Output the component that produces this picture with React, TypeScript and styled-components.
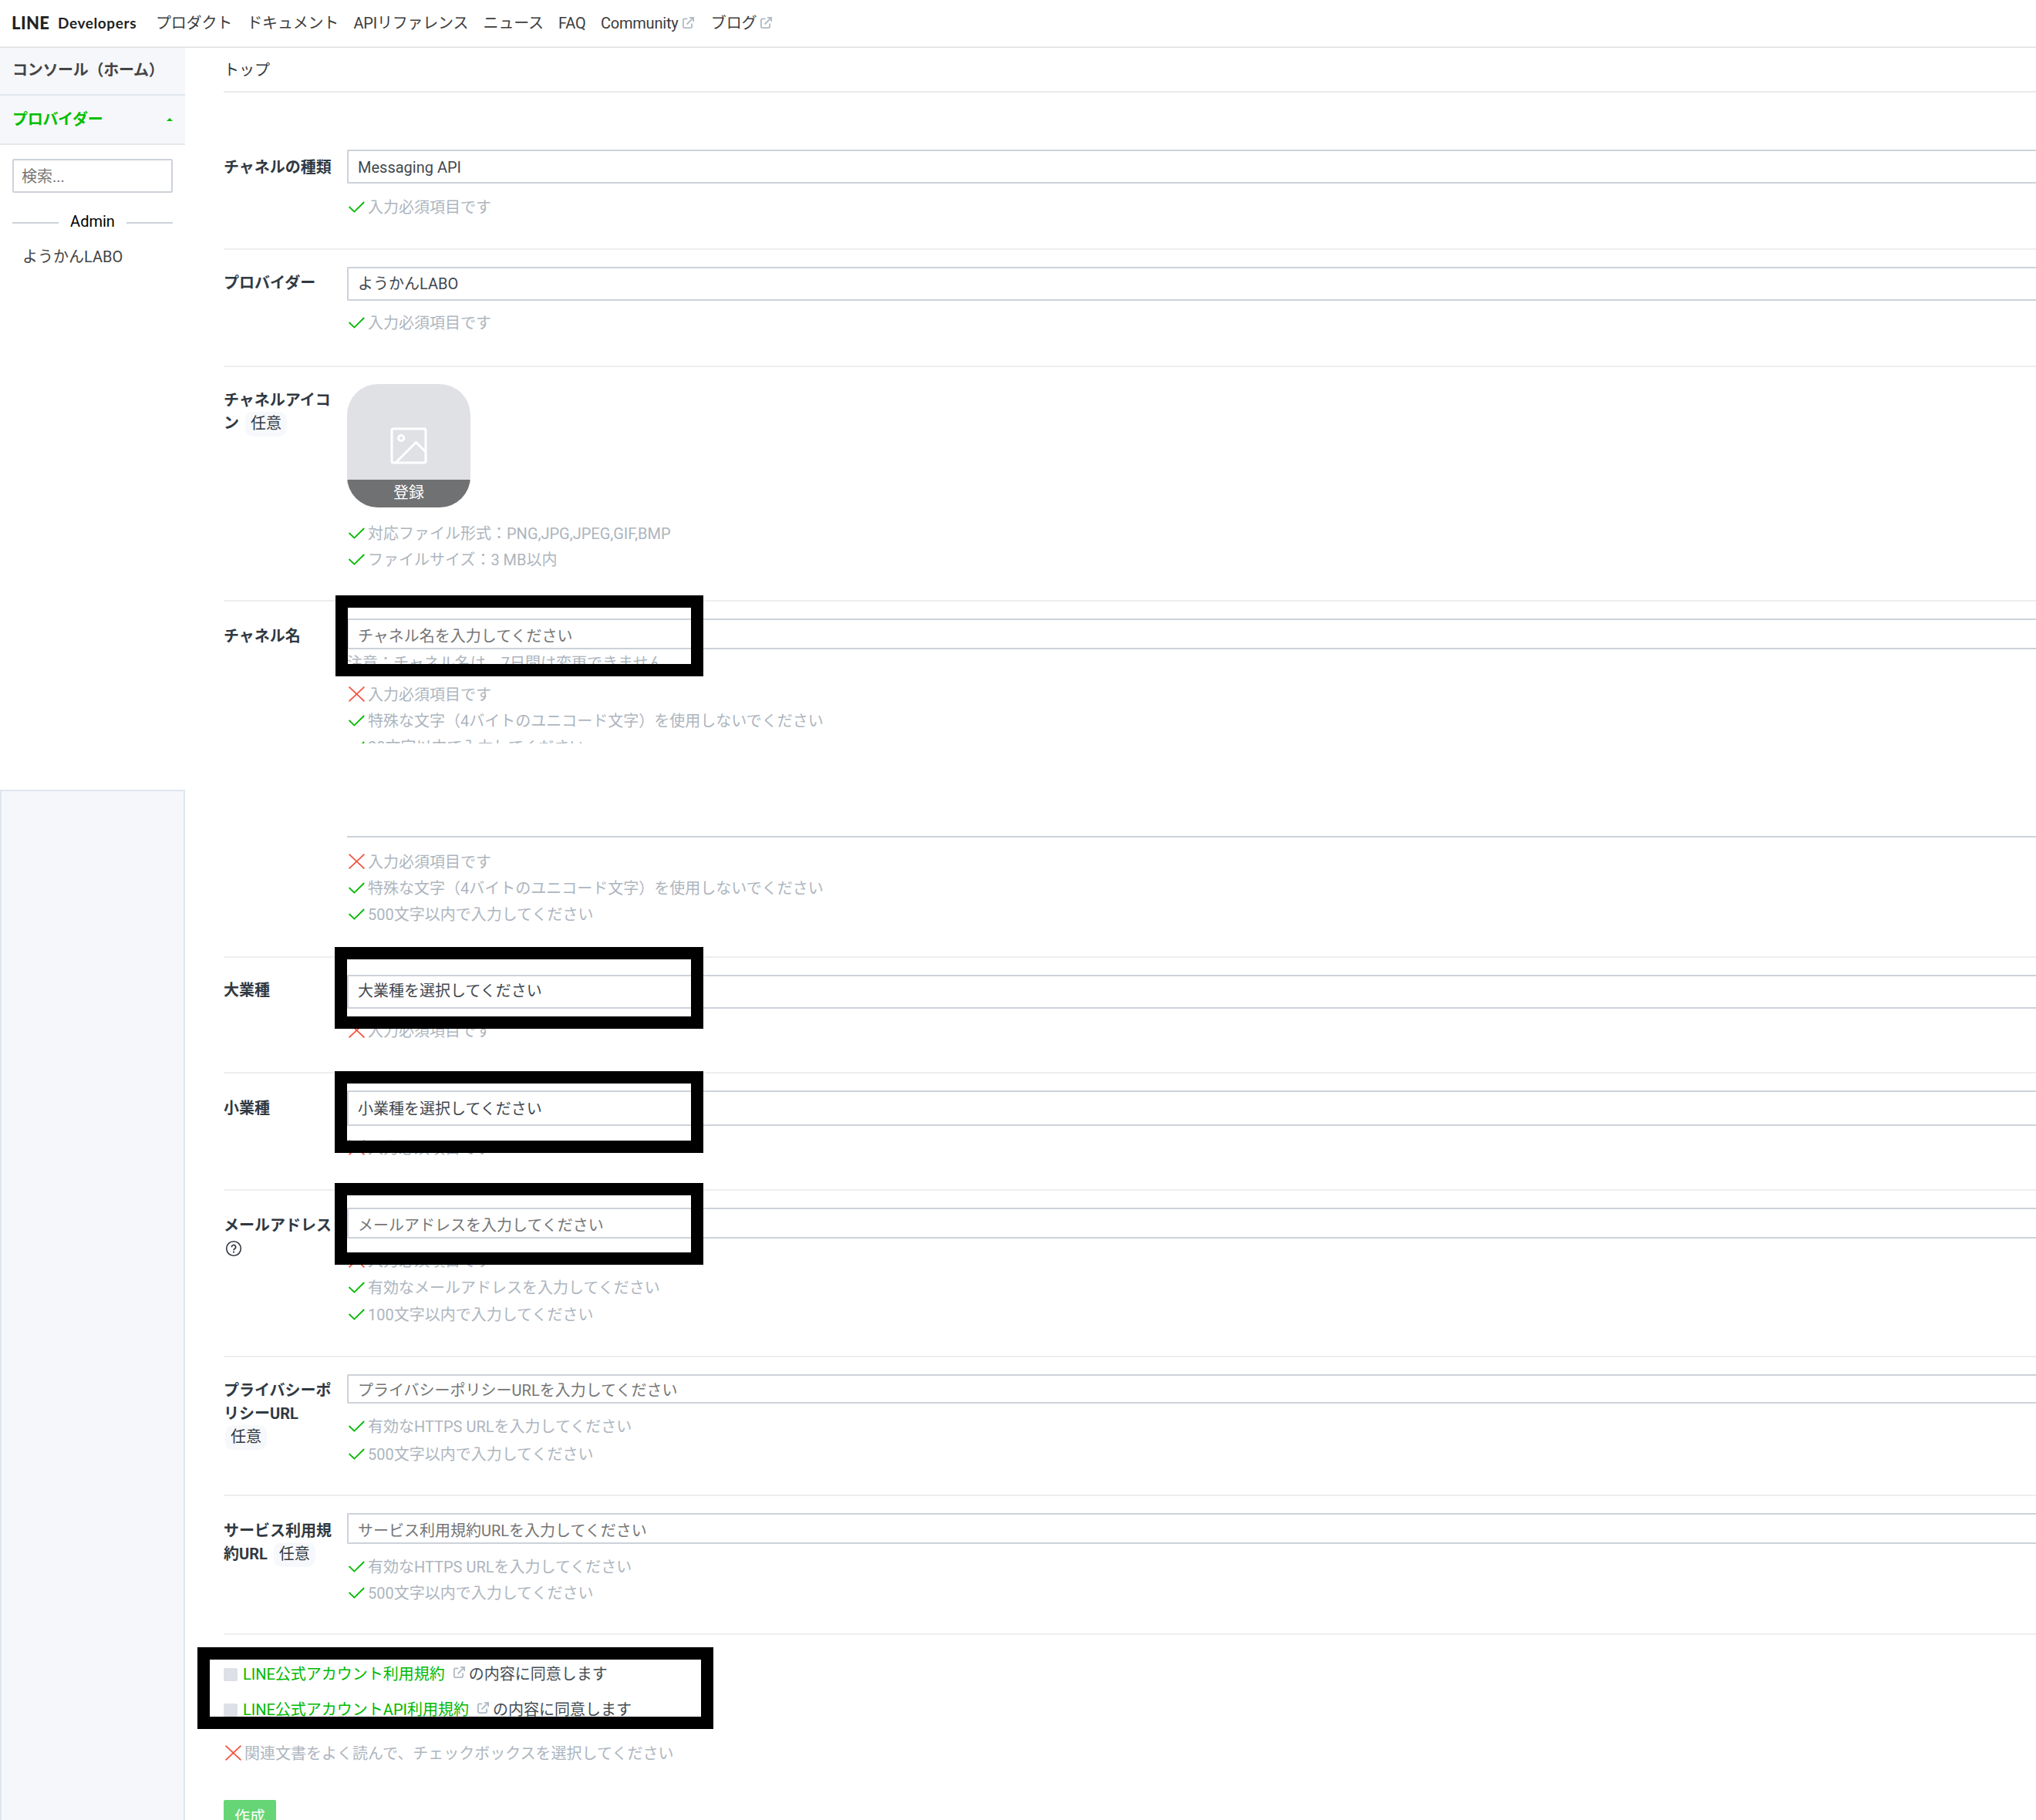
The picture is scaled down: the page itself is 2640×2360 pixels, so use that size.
import React from "react";
import styled, { createGlobalStyle } from "styled-components";

const GlobalStyle = createGlobalStyle`
  * {
    box-sizing: border-box;
  }
  body {
    margin: 0;
    background: #fff;
    color: #303942;
    font-family: Roboto, "Noto Sans CJK JP", sans-serif;
    font-size: 20px;
    line-height: 30px;
  }
`;

const Page = styled.div`
  width: 2640px;
  height: 2360px;
  overflow: hidden;
`;

const Header = styled.header`
  display: flex;
  align-items: center;
  height: 62px;
  padding: 0 0 1px 15px;
  border-bottom: 1px solid #dfe0e1;
  box-shadow: inset 0 -1px 0 #eeeff0;
  color: #3c3c3c;
`;

const Logo = styled.div`
  display: flex;
  align-items: center;
  width: 187px;
  padding-bottom: 1px;
  color: #222;
  white-space: nowrap;
`;

const LogoMark = styled.span`
  width: 60px;
  font-family: Lato, sans-serif;
  font-size: 22px;
  font-weight: 900;
  letter-spacing: 0.4px;
`;

const LogoName = styled.span`
  font-family: Lato, sans-serif;
  font-size: 19px;
  font-weight: 700;
  letter-spacing: 0.6px;
`;

const Nav = styled.nav`
  display: flex;
  gap: 19.3px;
  letter-spacing: -0.2px;
  white-space: nowrap;
`;

const NavItem = styled.a`
  display: flex;
  align-items: center;
  gap: 5px;
  svg {
    margin: 0 3px 2px 0;
  }
`;

const TopSection = styled.div`
  display: flex;
  height: 902px;
  overflow: hidden;
`;

const BottomSection = styled.div`
  display: flex;
  height: 1396px;
`;

const Sidebar = styled.aside`
  flex: none;
  width: 240px;
`;

const EmptySidebar = styled.aside`
  flex: none;
  width: 240px;
  margin-top: 60px;
  background: #f5f7fa;
  border: 2px solid #dfe6ee;
  border-bottom: 0;
`;

const SidebarItem = styled.div<{ $active?: boolean }>`
  display: flex;
  align-items: center;
  justify-content: space-between;
  height: ${(p) => (p.$active ? 64 : 62)}px;
  padding: 0 16px ${(p) => (p.$active ? 0 : 2)}px;
  background: #f5f7fa;
  border-bottom: 2px solid ${(p) => (p.$active ? "#e6e8ea" : "#dfe6ee")};
  color: ${(p) => (p.$active ? "#00bf00" : "#444")};
  font-weight: 700;
  letter-spacing: -0.3px;
`;

const Caret = styled.span`
  border: 4px solid transparent;
  border-top: 0;
  border-bottom-color: currentColor;
`;

const SearchInput = styled.input`
  display: block;
  width: 208px;
  height: 44px;
  margin: 18px 16px 22px;
  padding: 1px 10px 0;
  border: 2px solid #cdd2d9;
  border-radius: 2px;
  outline: 0;
  font: inherit;
  &::placeholder {
    color: #757575;
    opacity: 1;
  }
`;

const RoleHeading = styled.div`
  display: flex;
  align-items: center;
  gap: 15px;
  margin: 0 16px;
  color: #000;
  &::before,
  &::after {
    content: "";
    flex: 1;
    height: 2px;
    margin-top: 4px;
    background: #cdd2d9;
  }
`;

const ProviderName = styled.div`
  margin-top: 16px;
  padding-left: 29px;
  color: #444;
`;

const Main = styled.main`
  flex: 1;
  min-width: 0;
  padding-left: 50px;
`;

const Breadcrumb = styled.div`
  height: 58px;
  margin-bottom: 52px;
  padding-top: 14px;
  border-bottom: 2px solid #e9eaeb;
`;

const Row = styled.section<{ $height: number; $bare?: boolean }>`
  position: relative;
  display: grid;
  grid-template-columns: 160px 1fr;
  align-items: start;
  height: ${(p) => p.$height}px;
  padding-top: ${(p) => (p.$bare ? 120 : 22)}px;
  border-bottom: 2px solid #eee;
`;

const Label = styled.div<{ $top: number }>`
  width: 144px;
  padding-top: ${(p) => p.$top}px;
  font-weight: 700;
  word-break: break-all;
`;

const Optional = styled.span<{ $block?: boolean }>`
  display: inline-block;
  height: 32px;
  margin: ${(p) => (p.$block ? "0 0 0 2px" : "0 0 -2px 8px")};
  padding: 0 7px;
  border-radius: 10px;
  background: #f7f8fb;
  font-weight: 400;
  line-height: 31px;
  vertical-align: top;
`;

const Field = styled.input<{ $height: number; $shift: number }>`
  display: block;
  width: 100%;
  height: ${(p) => p.$height}px;
  padding: ${(p) => Math.max(0, p.$shift * 2)}px 12px
    ${(p) => Math.max(0, -p.$shift * 2)}px;
  border: 2px solid #cdd2d9;
  border-right: 0;
  border-radius: 2px 0 0 2px;
  outline: 0;
  background: #fff;
  color: #3f4850;
  font: inherit;
  &::placeholder {
    color: #757575;
    opacity: 1;
  }
`;

const HintList = styled.ul<{ $top: number; $gap?: number }>`
  display: flex;
  flex-direction: column;
  gap: ${(p) => p.$gap ?? 0}px;
  margin: 0;
  padding: ${(p) => p.$top}px 0 0;
  list-style: none;
`;

const HintItem = styled.li`
  display: flex;
  align-items: center;
  height: 34px;
  padding-top: 1px;
  color: #adb5be;
  white-space: nowrap;
  svg {
    flex: none;
    margin: 0 4px 1px 1px;
  }
`;

const Note = styled.p`
  margin: 3px 0 8px;
  color: #adb5be;
`;

const TextAreaEdge = styled.div`
  height: 2px;
  background: #cdd2d9;
`;

const IconUpload = styled.button`
  display: flex;
  flex-direction: column;
  justify-content: space-between;
  align-items: center;
  width: 160px;
  height: 160px;
  padding: 56px 0 0;
  border: 0;
  border-radius: 40px;
  overflow: hidden;
  background: #e0e1e5;
  font: inherit;
`;

const UploadLabel = styled.span`
  width: 100%;
  height: 36px;
  padding-top: 2px;
  background: #707173;
  color: #fff;
`;

// thick box drawn over the fields that have to be filled in
const Highlight = styled.div<{
  $left: number;
  $top: number;
  $width: number;
  $height: number;
}>`
  position: absolute;
  left: ${(p) => p.$left}px;
  top: ${(p) => p.$top}px;
  width: ${(p) => p.$width}px;
  height: ${(p) => p.$height}px;
  border: 16px solid #000;
  pointer-events: none;
`;

const Agreement = styled.section`
  position: relative;
  padding-top: 36px;
`;

const AgreementLine = styled.label`
  display: flex;
  align-items: center;
  height: 30px;
  margin-bottom: 16px;
  color: #444c54;
  white-space: nowrap;
`;

const CheckBox = styled.span`
  width: 18px;
  height: 17px;
  margin: 1px 7px 0 0;
  border-radius: 2px;
  background: #dde0e6;
`;

const TermsLink = styled.a`
  display: flex;
  align-items: center;
  color: #00b900;
  svg {
    margin: 0 5px 6px 11px;
  }
`;

const CreateButton = styled.button`
  display: block;
  width: 68px;
  height: 44px;
  margin-top: 44px;
  padding: 0;
  border: 0;
  border-radius: 2px;
  background: #66d575;
  color: #fff;
  font: inherit;
`;

const HelpIcon = styled.svg`
  display: block;
  margin: 4px 0 0 2px;
`;

const HelpMark = () => (
  <HelpIcon width="22" height="22" viewBox="0 0 22 22" fill="none" stroke="#303942">
    <circle cx="11" cy="11" r="9.3" strokeWidth="1.6" />
    <path d="M8.4 9.2a2.6 2.6 0 1 1 3.9 2.1c-.9.6-1.3 1-1.3 1.9" strokeWidth="1.7" />
    <circle cx="11" cy="15.6" r="1.1" fill="#303942" stroke="none" />
  </HelpIcon>
);

const CheckMark = () => (
  <svg width="22" height="20" viewBox="0 0 22 20" fill="none">
    <path d="M1.6 10 8.4 16.6 21.2 4" stroke="#00b900" strokeWidth="1.8" />
  </svg>
);

const CrossMark = () => (
  <svg width="22" height="20" viewBox="0 0 22 20" fill="none">
    <path d="M1.6.6 21.4 19.4M21.4.6 1.6 19.4" stroke="#f1523d" strokeWidth="1.7" />
  </svg>
);

const ExternalMark = () => (
  <svg width="15" height="15" viewBox="0 0 15 15" fill="none" stroke="#b1b9c2" strokeWidth="1.8">
    <path d="M6.3 2.4H2.4a1.5 1.5 0 0 0-1.5 1.5v8.7a1.5 1.5 0 0 0 1.5 1.5h8.2a1.5 1.5 0 0 0 1.5-1.5V8.4" />
    <path d="M9 .9h5.1V6M13.8 1.2 5.6 9.5" />
  </svg>
);

const PictureMark = () => (
  <svg width="48" height="48" viewBox="0 0 48 48" fill="none" stroke="#fff" strokeWidth="3">
    <rect x="2" y="2" width="44" height="44" rx="2" />
    <circle cx="14.2" cy="14" r="3.6" />
    <path d="M7.5 45.5 33.5 19.5 46 32" />
  </svg>
);

interface Hint {
  text: string;
  ok?: boolean;
}

const Hints = ({ items, top, gap }: { items: Hint[]; top: number; gap?: number }) => (
  <HintList $top={top} $gap={gap}>
    {items.map((hint) => (
      <HintItem key={hint.text}>
        {hint.ok ? <CheckMark /> : <CrossMark />}
        {hint.text}
      </HintItem>
    ))}
  </HintList>
);

const required = (ok = false): Hint => ({ text: "入力必須項目です", ok });
const noSpecialChars: Hint = {
  text: "特殊な文字（4バイトのユニコード文字）を使用しないでください",
  ok: true,
};
const maxLength = (n: number): Hint => ({
  text: `${n}文字以内で入力してください`,
  ok: true,
});
const validUrl: Hint = { text: "有効なHTTPS URLを入力してください", ok: true };

const navItems = [
  { title: "プロダクト" },
  { title: "ドキュメント" },
  { title: "APIリファレンス" },
  { title: "ニュース" },
  { title: "FAQ" },
  { title: "Community", external: true },
  { title: "ブログ", external: true },
];

export default function App() {
  return (
    <Page>
      <GlobalStyle />
      <Header>
        <Logo>
          <LogoMark>LINE</LogoMark>
          <LogoName>Developers</LogoName>
        </Logo>
        <Nav>
          {navItems.map((item) => (
            <NavItem key={item.title}>
              {item.title}
              {item.external && <ExternalMark />}
            </NavItem>
          ))}
        </Nav>
      </Header>

      <TopSection>
        <Sidebar>
          <SidebarItem>コンソール（ホーム）</SidebarItem>
          <SidebarItem $active>
            プロバイダー
            <Caret />
          </SidebarItem>
          <SearchInput placeholder="検索..." />
          <RoleHeading>Admin</RoleHeading>
          <ProviderName>ようかんLABO</ProviderName>
        </Sidebar>
        <Main>
          <Breadcrumb>トップ</Breadcrumb>
          <Row $height={152}>
            <Label $top={8}>チャネルの種類</Label>
            <div>
              <Field $height={44} $shift={1} defaultValue="Messaging API" />
              <Hints top={13} items={[required(true)]} />
            </div>
          </Row>
          <Row $height={152}>
            <Label $top={6}>プロバイダー</Label>
            <div>
              <Field $height={44} $shift={-2} defaultValue="ようかんLABO" />
              <Hints top={11} items={[required(true)]} />
            </div>
          </Row>
          <Row $height={304}>
            <Label $top={6}>
              チャネルアイコン
              <Optional>任意</Optional>
            </Label>
            <div>
              <IconUpload>
                <PictureMark />
                <UploadLabel>登録</UploadLabel>
              </IconUpload>
              <Hints
                top={16}
                items={[
                  { text: "対応ファイル形式：PNG,JPG,JPEG,GIF,BMP", ok: true },
                  { text: "ファイルサイズ：3 MB以内", ok: true },
                ]}
              />
            </div>
          </Row>
          <Row $height={304}>
            <Label $top={8}>チャネル名</Label>
            <div>
              <Field $height={40} $shift={3} placeholder="チャネル名を入力してください" />
              <Note>注意：チャネル名は、7日間は変更できません</Note>
              <Hints top={0} items={[required(), noSpecialChars, maxLength(20)]} />
            </div>
            <Highlight $left={145} $top={-8} $width={477} $height={105} />
          </Row>
        </Main>
      </TopSection>

      <BottomSection>
        <EmptySidebar />
        <Main>
          <Row $height={278} $bare>
            <div />
            <div>
              <TextAreaEdge />
              <Hints top={14} items={[required(), noSpecialChars, maxLength(500)]} />
            </div>
          </Row>
          <Row $height={150}>
            <Label $top={5}>大業種</Label>
            <div>
              <Field $height={44} $shift={-2.5} defaultValue="大業種を選択してください" />
              <Hints top={11} items={[required()]} />
            </div>
            <Highlight $left={144} $top={-14} $width={478} $height={106} />
          </Row>
          <Row $height={152}>
            <Label $top={8}>小業種</Label>
            <div>
              <Field $height={46} $shift={-1} defaultValue="小業種を選択してください" />
              <Hints top={11} items={[required()]} />
            </div>
            <Highlight $left={144} $top={-3} $width={478} $height={106} />
          </Row>
          <Row $height={216}>
            <Label $top={8}>
              メールアドレス
              <HelpMark />
            </Label>
            <div>
              <Field $height={40} $shift={2.5} placeholder="メールアドレスを入力してください" />
              <Hints
                top={11}
                gap={1}
                items={[
                  required(),
                  { text: "有効なメールアドレスを入力してください", ok: true },
                  maxLength(100),
                ]}
              />
            </div>
            <Highlight $left={144} $top={-10} $width={478} $height={106} />
          </Row>
          <Row $height={180}>
            <Label $top={6}>
              プライバシーポリシーURL
              <Optional $block>任意</Optional>
            </Label>
            <div>
              <Field
                $height={38}
                $shift={2}
                placeholder="プライバシーポリシーURLを入力してください"
              />
              <Hints top={12} gap={2} items={[validUrl, maxLength(500)]} />
            </div>
          </Row>
          <Row $height={180}>
            <Label $top={8}>
              サービス利用規約URL
              <Optional>任意</Optional>
            </Label>
            <div>
              <Field
                $height={40}
                $shift={3}
                placeholder="サービス利用規約URLを入力してください"
              />
              <Hints top={12} items={[validUrl, maxLength(500)]} />
            </div>
          </Row>
          <Agreement>
            <AgreementLine>
              <CheckBox />
              <TermsLink>
                LINE公式アカウント利用規約
                <ExternalMark />
              </TermsLink>
              の内容に同意します
            </AgreementLine>
            <AgreementLine>
              <CheckBox />
              <TermsLink>
                LINE公式アカウントAPI利用規約
                <ExternalMark />
              </TermsLink>
              の内容に同意します
            </AgreementLine>
            <Hints
              top={8}
              items={[{ text: "関連文書をよく読んで、チェックボックスを選択してください" }]}
            />
            <CreateButton>作成</CreateButton>
            <Highlight $left={-34} $top={16} $width={669} $height={106} />
          </Agreement>
        </Main>
      </BottomSection>
    </Page>
  );
}
